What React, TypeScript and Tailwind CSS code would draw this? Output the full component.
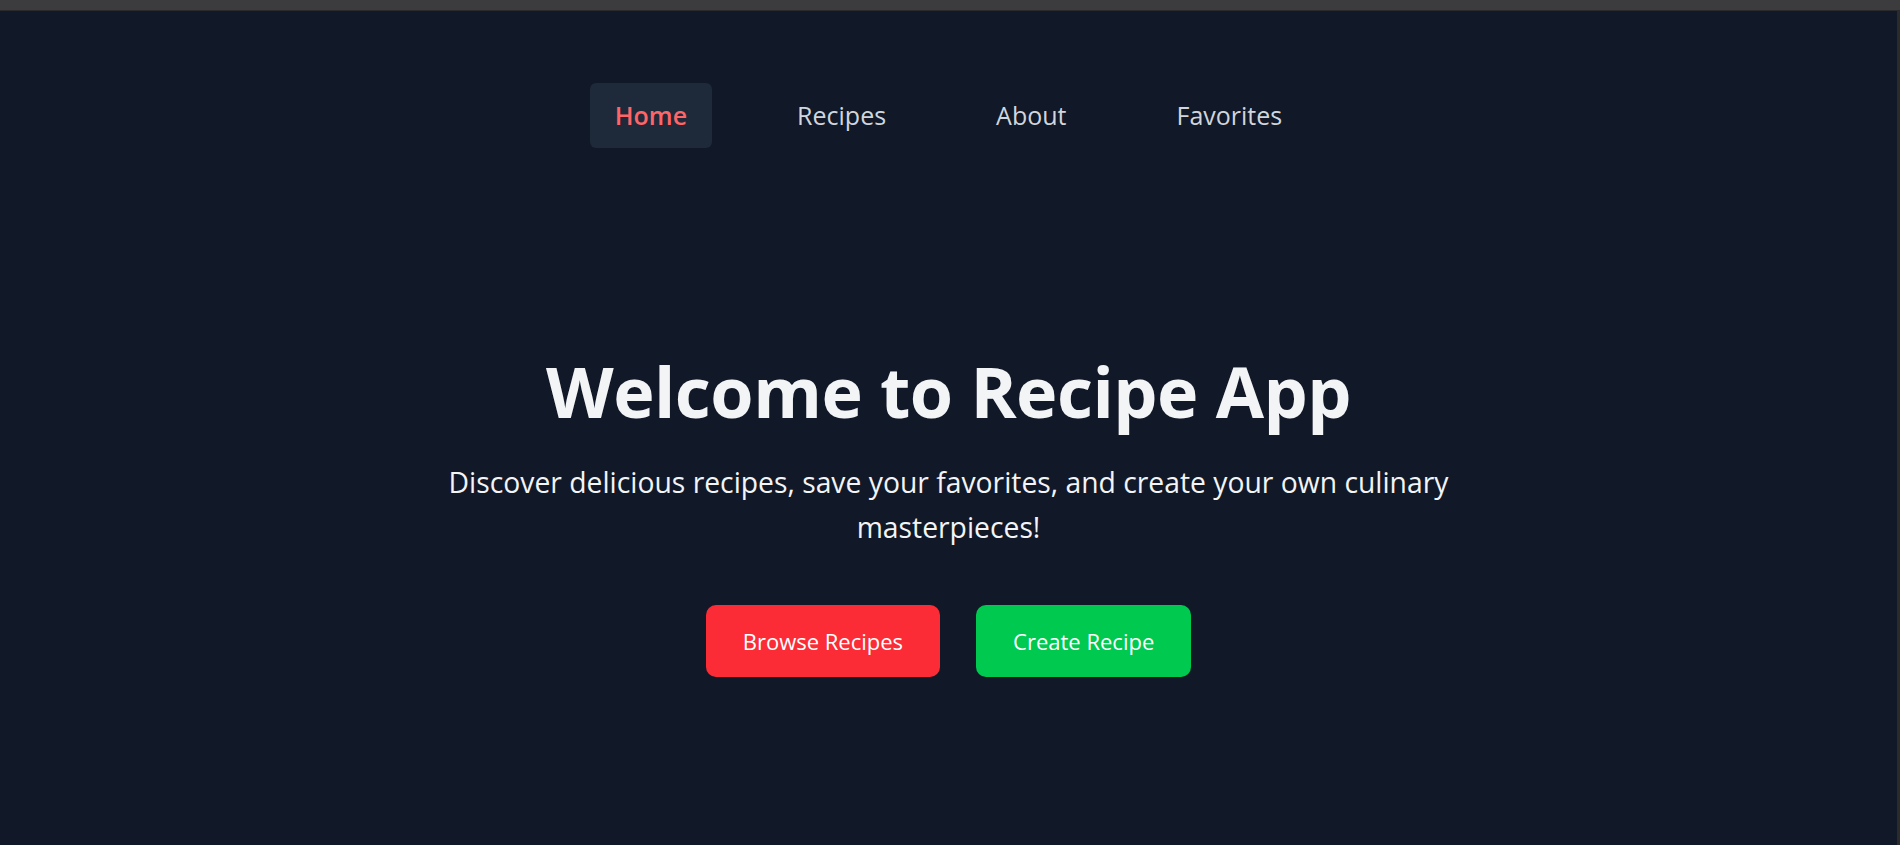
import { useState } from "react";

const navItems = ["Home", "Recipes", "About", "Favorites"];

export default function App() {
  const [active, setActive] = useState("Home");

  return (
    <div className="flex min-h-screen flex-col bg-[#3c3c3e] font-['Open_Sans',sans-serif]">
      {/* window chrome strip */}
      <div className="h-[10px] shrink-0 bg-[#3c3c3e]" />
      <div className="h-px shrink-0 bg-[#2a2a2c]" />
      <div className="flex flex-1">
        <main className="flex-1 bg-[#111827] pb-20">
          <nav className="flex justify-center gap-[60px] pt-[72px]">
            {navItems.map((item) => (
              <button
                key={item}
                onClick={() => setActive(item)}
                className={
                  item === active
                    ? "rounded-md bg-[#1e2939] px-[25px] py-[16px] text-[25px] leading-[33px] font-semibold text-[#ff6467]"
                    : "rounded-md px-[25px] py-[16px] text-[25px] leading-[33px] text-[#d1d5dc] hover:text-white"
                }
              >
                {item}
              </button>
            ))}
          </nav>

          <section className="mt-[208px] flex flex-col items-center px-6 text-center">
            <h1 className="text-[70px] leading-none font-bold tracking-[-0.5px] text-[#f3f4f6]">
              Welcome to Recipe App
            </h1>
            <p className="mt-[34px] max-w-[1010px] text-[28.3px] leading-[45px] text-[#f3f4f6]">
              Discover delicious recipes, save your favorites, and create your own culinary masterpieces!
            </p>
            <div className="mt-[55px] flex gap-[36px]">
              <button className="rounded-[10px] bg-[#fb2c36] px-[37px] py-[19px] text-[22px] leading-[34px] text-white hover:bg-[#e7000b]">
                Browse Recipes
              </button>
              <button className="rounded-[10px] bg-[#00c950] px-[37px] py-[19px] text-[22px] leading-[34px] text-white hover:bg-[#00a63e]">
                Create Recipe
              </button>
            </div>
          </section>
        </main>
        <div className="w-[3px] shrink-0 bg-[#2b2b2b]" />
      </div>
    </div>
  );
}
